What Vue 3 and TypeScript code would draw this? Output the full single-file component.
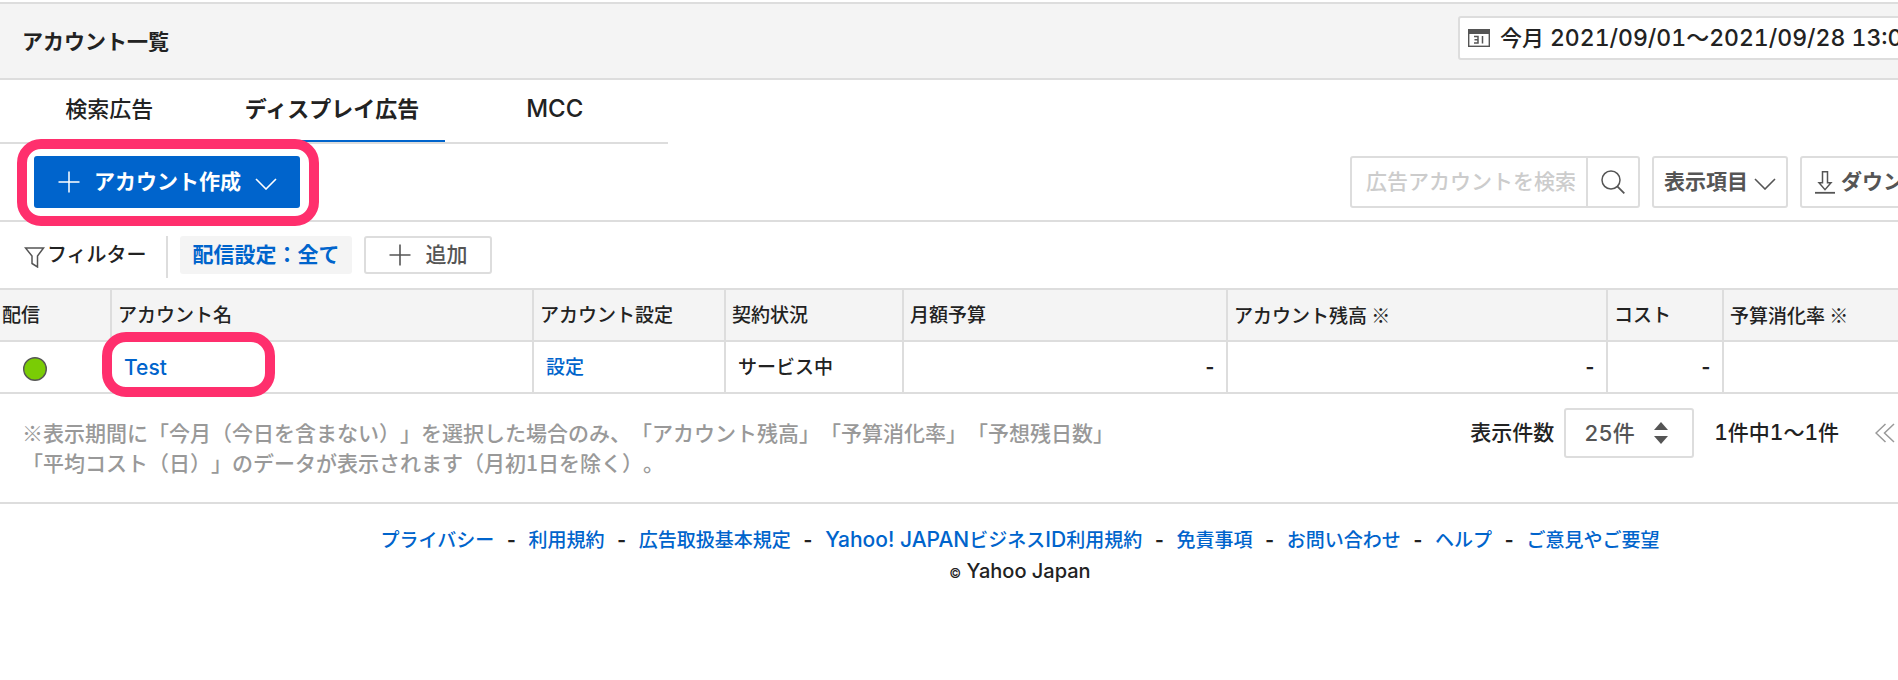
<script setup lang="ts">
import { ref } from 'vue'

interface Column {
  key: string
  label: string
  noted?: boolean
}

const tabs = [
  { label: '検索広告', latin: false },
  { label: 'ディスプレイ広告', latin: false },
  { label: 'MCC', latin: true },
]
const activeTab = ref('ディスプレイ広告')
const keyword = ref('')
const pageSize = ref('25')

const columns: Column[] = [
  { key: 'status', label: '配信' },
  { key: 'name', label: 'アカウント名' },
  { key: 'setting', label: 'アカウント設定' },
  { key: 'contract', label: '契約状況' },
  { key: 'budget', label: '月額予算' },
  { key: 'balance', label: 'アカウント残高', noted: true },
  { key: 'cost', label: 'コスト' },
  { key: 'rate', label: '予算消化率', noted: true },
]

const links = [
  'プライバシー',
  '利用規約',
  '広告取扱基本規定',
  'Yahoo! JAPANビジネスID利用規約',
  '免責事項',
  'お問い合わせ',
  'ヘルプ',
  'ご意見やご要望',
]

// Odd entries are the Latin runs, even entries the Japanese ones.
const runs = (text: string): string[] => text.split(/([ -~]+)/)
</script>

<template>
  <div class="viewport">
    <div class="page">
      <header class="header">
        <h1 class="title">アカウント一覧</h1>
        <button class="box date" type="button">
          <svg width="22" height="18" viewBox="0 0 22 18" aria-hidden="true">
            <rect x="0.7" y="0.7" width="20.6" height="16.6" fill="#fff" stroke="#555" stroke-width="1.4" />
            <rect width="22" height="5" fill="#555" />
            <path d="M6 7.500h4v6.500H6M6.500 10.700H10M14.500 7v7.500" fill="none" stroke="#555" stroke-width="1.500" />
          </svg>
          <span>今月 <span class="period">2021/09/01〜2021/09/28 13:00</span></span>
        </button>
      </header>

      <nav class="tabs">
        <button
          v-for="tab in tabs"
          :key="tab.label"
          type="button"
          class="tab"
          :class="{ active: tab.label === activeTab, latin: tab.latin }"
          @click="activeTab = tab.label"
        >{{ tab.label }}</button>
      </nav>

      <section class="toolbar">
        <div class="create-wrap">
          <button class="create" type="button">
            <svg width="22" height="22" viewBox="0 0 22 22" aria-hidden="true">
              <path d="M11 0.500v21M0.500 11h21" stroke="#fff" stroke-width="1.500" />
            </svg>
            <span class="create-label">アカウント作成</span>
            <svg class="chev" width="22" height="12" viewBox="0 0 22 12" aria-hidden="true">
              <path d="M1 1l10 10L21 1" fill="none" stroke="#fff" stroke-width="1.600" />
            </svg>
          </button>
          <span class="mark mark-create"></span>
        </div>
        <div class="tools">
          <form class="search" @submit.prevent>
            <input v-model="keyword" type="text" placeholder="広告アカウントを検索" aria-label="広告アカウントを検索" />
            <button type="submit" aria-label="検索">
              <svg width="24" height="24" viewBox="0 0 24 24" aria-hidden="true">
                <circle cx="10" cy="10" r="9" fill="none" stroke="#555" stroke-width="1.500" />
                <path d="M16.300 16.300L23.300 23.300" stroke="#555" stroke-width="1.800" />
              </svg>
            </button>
          </form>
          <button class="box items" type="button">
            表示項目
            <svg class="chev" width="22" height="12" viewBox="0 0 22 12" aria-hidden="true">
              <path d="M1 1l10 10L21 1" fill="none" stroke="#555" stroke-width="1.600" />
            </svg>
          </button>
          <button class="box download" type="button">
            <svg width="20" height="24" viewBox="0 0 20 24" aria-hidden="true">
              <path d="M7.500 1.700h5v11h3.500l-6 7-6-7h3.500z" fill="none" stroke="#555" stroke-width="1.500" />
              <path d="M0 22.800h20" stroke="#555" stroke-width="1.800" />
            </svg>
            ダウンロード
          </button>
        </div>
      </section>

      <section class="filters">
        <div class="filter-label">
          <svg width="21" height="21" viewBox="0 0 21 21" aria-hidden="true">
            <path d="M1.500 1h18l-6 8v11l-5.500-3.500V9z" fill="none" stroke="#555" stroke-width="1.500" />
          </svg>
          <span>フィルター</span>
        </div>
        <button class="chip" type="button">配信設定：全て</button>
        <button class="box add" type="button">
          <svg width="22" height="22" viewBox="0 0 22 22" aria-hidden="true">
            <path d="M11 0.500v21M0.500 11h21" stroke="#555" stroke-width="1.600" />
          </svg>
          追加
        </button>
      </section>

      <table class="grid">
        <colgroup>
          <col v-for="c in columns" :key="c.key" :class="'col-' + c.key" />
        </colgroup>
        <thead>
          <tr>
            <th v-for="c in columns" :key="c.key" scope="col">
              {{ c.label }}<span v-if="c.noted" class="ja">&nbsp;※</span>
            </th>
          </tr>
        </thead>
        <tbody>
          <tr>
            <td class="status">
              <svg width="24" height="24" viewBox="0 0 24 24" role="img" aria-label="配信中">
                <circle cx="12" cy="12" r="11.300" fill="#7acc05" stroke="#555" stroke-width="1.400" />
              </svg>
            </td>
            <td class="name"><a href="#">Test</a><span class="mark mark-name"></span></td>
            <td><a href="#">設定</a></td>
            <td>サービス中</td>
            <td class="num">-</td>
            <td class="num">-</td>
            <td class="num">-</td>
            <td class="num"></td>
          </tr>
        </tbody>
      </table>

      <section class="below">
        <p class="note ja">
          ※表示期間に「今月（今日を含まない）」を選択した場合のみ、「アカウント残高」「予算消化率」「予想残日数」<br />「平均コスト（日）」のデータが表示されます（月初1日を除く）。
        </p>
        <div class="pager">
          <label for="page-size">表示件数</label>
          <div class="select">
            <select id="page-size" v-model="pageSize">
              <option value="25">25件</option>
              <option value="50">50件</option>
            </select>
            <svg width="14" height="22" viewBox="0 0 14 22" aria-hidden="true">
              <path d="M7 0l7 8H0zM7 22l7-8H0z" fill="#555" />
            </svg>
          </div>
          <span>1件中1〜1件</span>
          <button class="first" type="button" aria-label="最初のページ">
            <svg width="20" height="20" viewBox="0 0 20 20" aria-hidden="true">
              <path d="M10.500 1L1 10l9.500 9M19 1l-9.500 9L19 19" fill="none" stroke="#999" stroke-width="1.500" />
            </svg>
          </button>
        </div>
      </section>

      <footer class="footer">
        <ul class="links">
          <li v-for="l in links" :key="l">
            <a href="#"><span v-for="(r, i) in runs(l)" :key="i" :class="{ latin: i % 2 === 1 }">{{ r }}</span></a>
          </li>
        </ul>
        <p class="copy"><small>©</small> Yahoo Japan</p>
      </footer>
    </div>
  </div>
</template>

<style>
body {
  background: #fff;
}
</style>

<style scoped>
.viewport {
  overflow: hidden;
  min-height: 100vh;
}
.page {
  width: calc(100% + 142px);
  padding-top: 2px;
  color: #222;
  font-family: Inter, "Noto Sans CJK JP", sans-serif;
  font-size: 21px;
  font-weight: 500;
  font-variant-numeric: tabular-nums;
  line-height: 30px;
  text-spacing-trim: space-all;
}
.page *,
.page {
  box-sizing: border-box;
}
button,
input,
select {
  margin: 0;
  padding: 0;
  border: 0;
  background: none;
  color: inherit;
  font: inherit;
  border-radius: 0;
  outline: 0;
}
svg {
  display: block;
  flex: none;
}
a {
  color: #0064cc;
  text-decoration: none;
}
.ja {
  font-family: "Noto Sans CJK JP", sans-serif;
}
.box {
  display: flex;
  align-items: center;
  background: #fff;
  border: 2px solid #ddd;
  border-radius: 3px;
  color: #555;
  white-space: nowrap;
}
.header {
  display: flex;
  justify-content: space-between;
  align-items: flex-start;
  padding: 12px 22px 18px;
  background: #f4f4f4;
  border-top: 2px solid #ddd;
  border-bottom: 2px solid #ddd;
}
.title {
  margin: 0;
  padding-top: 11px;
  font-size: 21px;
  font-weight: 700;
  line-height: 30px;
}
.date {
  width: 560px;
  height: 44px;
  gap: 10px;
  padding-left: 8px;
  color: #222;
  font-size: 22px;
}
.period {
  font-size: 23px;
}
.tabs {
  display: flex;
  width: 668px;
  border-bottom: 2px solid #ddd;
}
.tab {
  flex: 1;
  height: 62px;
  padding: 0 4px 2px 0;
  border-bottom: 2px solid transparent;
  font-size: 22px;
}
.tab.active {
  border-bottom-color: #0064cc;
  font-weight: 700;
}
.tab.latin {
  font-size: 24px;
}
.toolbar {
  display: flex;
  justify-content: space-between;
  padding: 12px 22px 12px 34px;
  border-bottom: 2px solid #ddd;
}
.create-wrap {
  position: relative;
}
.create {
  display: flex;
  align-items: center;
  width: 266px;
  height: 52px;
  padding: 0 24px;
  background: #0064cc;
  border-radius: 3px;
  color: #fff;
  font-weight: 700;
  white-space: nowrap;
}
.create-label {
  margin: 0 14px;
}
.chev {
  margin-top: 4px;
}
.mark {
  position: absolute;
  border: 10px solid #ff2f6d;
  border-radius: 24px;
  pointer-events: none;
}
.mark-create {
  inset: -17px -19px -18px -17px;
}
.mark-name {
  top: -10px;
  left: -10px;
  width: 173px;
  height: 65px;
}
.tools {
  display: flex;
  gap: 12px;
}
.search {
  display: flex;
  width: 290px;
  height: 52px;
  border: 2px solid #ddd;
  border-radius: 3px;
}
.search input {
  flex: 1;
  min-width: 0;
  padding-left: 14px;
}
.search input::placeholder {
  color: #ccc;
  opacity: 1;
}
.search button {
  display: flex;
  align-items: center;
  justify-content: center;
  width: 52px;
  border-left: 2px solid #ddd;
}
.items {
  justify-content: center;
  gap: 6px;
  width: 136px;
  font-weight: 700;
}
.download {
  width: 218px;
  gap: 6px;
  padding-left: 13px;
  font-weight: 700;
}
.filters {
  display: flex;
  align-items: flex-start;
  gap: 12px;
  padding: 14px 24px 10px;
}
.filter-label {
  display: flex;
  align-items: flex-start;
  gap: 2px;
  width: 144px;
  height: 42px;
  padding-top: 4px;
  border-right: 2px solid #ddd;
  font-size: 20px;
  white-space: nowrap;
}
.filter-label svg {
  margin-top: 7px;
}
.chip {
  width: 172px;
  height: 38px;
  background: #f4f4f4;
  border-radius: 3px;
  color: #0064cc;
  font-weight: 700;
  white-space: nowrap;
}
.add {
  justify-content: center;
  gap: 15px;
  width: 128px;
  height: 38px;
}
.grid {
  width: 100%;
  table-layout: fixed;
  border-collapse: separate;
  border-spacing: 0;
  font-size: 19px;
}
.col-status {
  width: 110px;
}
.col-name {
  width: 422px;
}
.col-setting {
  width: 192px;
}
.col-contract {
  width: 178px;
}
.col-budget {
  width: 324px;
}
.col-balance {
  width: 380px;
}
.col-cost {
  width: 116px;
}
.grid th,
.grid td {
  text-align: left;
  vertical-align: middle;
  border-bottom: 2px solid #ddd;
  border-left: 2px solid #ddd;
  white-space: nowrap;
}
.grid th {
  height: 54px;
  padding: 2px 6px 0;
  background: #f4f4f4;
  border-top: 2px solid #ddd;
  font-weight: 500;
}
.grid td {
  height: 52px;
  padding: 2px 12px 0;
}
.grid th:first-child,
.grid td:first-child {
  border-left: 0;
}
.grid th:first-child {
  padding-left: 2px;
}
.grid .status {
  padding: 4px 0 0 23px;
}
.grid .name {
  position: relative;
}
.grid .name a {
  font-size: 21px;
}
.grid .num {
  padding-right: 10px;
  font-weight: 700;
  text-align: right;
}
.below {
  display: flex;
  justify-content: space-between;
  align-items: flex-start;
  padding: 14px 145px 25px 22px;
}
.note {
  margin: 0;
  padding-top: 9px;
  color: #999;
  white-space: nowrap;
}
.pager {
  display: flex;
  align-items: center;
  white-space: nowrap;
}
.select {
  position: relative;
  margin: 0 20px 0 10px;
}
.select select {
  display: block;
  width: 130px;
  height: 50px;
  padding-left: 18px;
  border: 2px solid #ddd;
  border-radius: 3px;
  color: #555;
  font-size: 22px;
  appearance: none;
}
.select svg {
  position: absolute;
  right: 26px;
  top: 14px;
  pointer-events: none;
}
.first {
  margin-left: 36px;
}
.footer {
  padding-top: 22px;
  border-top: 2px solid #ddd;
  font-size: 19px;
  text-align: center;
}
.links {
  display: flex;
  justify-content: center;
  margin: 0;
  padding: 0;
  list-style: none;
  white-space: nowrap;
}
.links .latin {
  font-size: 21px;
  line-height: 20px;
}
.links li + li::before {
  content: "-";
  margin: 0 11px;
  font-weight: 700;
}
.copy {
  margin: 0;
  font-size: 20px;
}
.copy small {
  font-size: 13px;
  line-height: 20px;
}
</style>
